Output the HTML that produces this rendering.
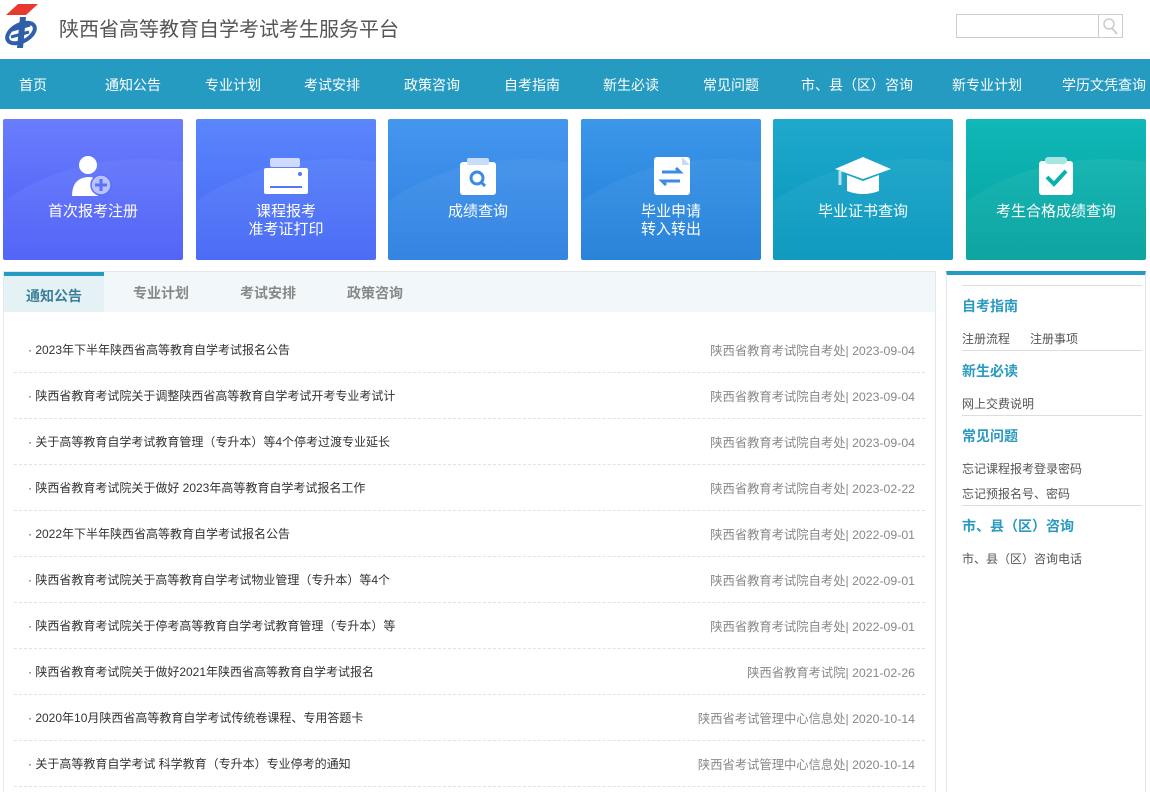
<!DOCTYPE html>
<html><head><meta charset="utf-8"><style>
*{margin:0;padding:0;box-sizing:border-box}
body{width:1150px;height:792px;overflow:hidden;background:#fff;font-family:"Liberation Sans","Noto Sans CJK SC",sans-serif;position:relative}
.abs{position:absolute}
.title{left:59px;top:13px;font-size:20px;color:#555;white-space:nowrap}
.search{left:956px;top:14px;width:167px;height:24px;border:1px solid #ccc}
.search .btn{position:absolute;right:0;top:0;width:24px;height:22px;border-left:1px solid #ccc}
.nav{left:0;top:59px;width:1150px;height:50px;background:#269bc1}
.nav span{position:absolute;top:16px;font-size:14px;color:#fff;white-space:nowrap}
.tile{top:119px;width:180px;height:141px;border-radius:2px;color:#fff;font-size:15px;text-align:center;overflow:hidden}
.tile .t{position:absolute;left:0;width:100%;line-height:18px}
.tile svg{position:absolute;left:50%;transform:translateX(-50%);top:36px}
.tile:before{content:"";position:absolute;left:-60px;top:40px;width:400px;height:300px;border-radius:50%;background:rgba(255,255,255,.05)}
.box{left:3px;top:271px;width:933px;height:521px;border:1px solid #e3e8ea;border-bottom:none}
.tabs{position:absolute;left:0;top:0;width:931px;height:40px;background:#f2f8fa}
.tabs span{position:absolute;top:11px;font-size:14px;color:#888;font-weight:bold}
.tabs .act{left:0;top:0;width:100px;height:40px;background:#e4f1f5;border-top:4px solid #269bc1;color:#3a7f99;padding:10px 0 0 22px}
.row{position:absolute;left:10px;width:911px;height:46px;border-bottom:1px dashed #e2e2e2;font-size:12px;color:#333}
.row .l{position:absolute;left:14px;top:14px;white-space:nowrap}
.row .r{position:absolute;right:10px;top:14px;color:#888;white-space:nowrap;font-size:12.3px}
.side{left:946px;top:271px;width:200px;height:521px;border:1px solid #e3e8ea;border-top:4px solid #269bc1;border-bottom:none}
.side .ln{position:absolute;left:15px;width:180px;border-top:1px solid #ddd}
.side .h{position:absolute;left:15px;font-size:14px;font-weight:bold;color:#2a9ac0;white-space:nowrap}
.side .i{position:absolute;left:15px;font-size:12px;color:#555;white-space:nowrap}
</style></head><body>
<svg class="abs" style="left:2px;top:3px" width="38" height="46" viewBox="0 0 38 46">
<path d="M16 1 L36 1 L24 12 L4 12 Z" fill="#e8392f"/>
<ellipse cx="19" cy="30" rx="15" ry="8.5" fill="none" stroke="#2f5fa8" stroke-width="4" transform="rotate(-28 19 30)"/>
<path d="M18 14 L24 14 L21 45 L15 45 Z" fill="#2f5fa8"/>
<path d="M10 27 L28 22 M9 34 L27 29" stroke="#2f5fa8" stroke-width="3"/>
</svg>
<div class="abs title">陕西省高等教育自学考试考生服务平台</div>
<div class="abs search"><div class="btn"><svg width="22" height="22" viewBox="0 0 22 22"><circle cx="10" cy="9" r="5" fill="none" stroke="#ccc" stroke-width="1.5"/><path d="M13 13 L18 19" stroke="#ccc" stroke-width="2"/></svg></div></div>
<div class="abs nav">
<span style="left:19px">首页</span><span style="left:105px">通知公告</span><span style="left:205px">专业计划</span><span style="left:304px">考试安排</span><span style="left:404px">政策咨询</span><span style="left:504px">自考指南</span><span style="left:603px">新生必读</span><span style="left:703px">常见问题</span><span style="left:801px">市、县（区）咨询</span><span style="left:952px">新专业计划</span><span style="left:1062px">学历文凭查询</span>
</div>

<div class="abs tile" style="left:3px;background:linear-gradient(#6a7dfc,#4a5df7)">
<svg width="50" height="44" viewBox="0 0 50 44"><circle cx="20" cy="10" r="9" fill="#fff"/><path d="M4 41 Q4 23 20 22 Q28 22 32 26 L30 41 Z" fill="#fff"/><circle cx="33" cy="30" r="10" fill="#b8c2fc" stroke="#5d70fa" stroke-width="1.5"/><path d="M33 24 V36 M27 30 H39" stroke="#5d70fa" stroke-width="3"/></svg>
<div class="t" style="top:84px">首次报考注册</div></div>
<div class="abs tile" style="left:196px;background:linear-gradient(#5b86fc,#4365f5)">
<svg width="46" height="44" viewBox="0 0 46 44"><rect x="7" y="3" width="30" height="9" rx="2" fill="#d0dafe"/><rect x="1" y="13" width="44" height="26" rx="2" fill="#fff"/><circle cx="37" cy="19" r="2" fill="#5577f8"/><rect x="7" y="31" width="32" height="2" fill="#5577f8"/></svg>
<div class="t" style="top:84px">课程报考<br>准考证打印</div></div>
<div class="abs tile" style="left:388px;background:linear-gradient(#4596ed,#2a7fe0)">
<svg width="46" height="44" viewBox="0 0 46 44"><rect x="5" y="7" width="36" height="33" rx="3" fill="#fff"/><rect x="12" y="3" width="22" height="7" rx="2" fill="#c9dcfa"/><circle cx="22" cy="23" r="6" fill="none" stroke="#3a8be6" stroke-width="3"/><path d="M26 27 L30 31" stroke="#3a8be6" stroke-width="3"/></svg>
<div class="t" style="top:84px">成绩查询</div></div>
<div class="abs tile" style="left:581px;background:linear-gradient(#3c97e9,#1f7dd8)">
<svg width="46" height="44" viewBox="0 0 46 44"><rect x="6" y="2" width="36" height="38" rx="3" fill="#fff"/><path d="M34 2 L42 10 L34 10 Z" fill="#c6dcf6"/><path d="M14 17 H32 L28 13 M32 26 H14 L18 30" fill="none" stroke="#3a8be6" stroke-width="3"/></svg>
<div class="t" style="top:84px">毕业申请<br>转入转出</div></div>
<div class="abs tile" style="left:773px;background:linear-gradient(#1fa9cc,#0395bc)">
<svg width="60" height="44" viewBox="0 0 60 44"><path d="M2 14 L30 2 L58 14 L30 24 Z" fill="#fff"/><path d="M14 20 V36 Q30 42 46 36 V20 L30 26 Z" fill="#fff"/><path d="M7 16 V30" stroke="#b5e2ee" stroke-width="3"/></svg>
<div class="t" style="top:84px">毕业证书查询</div></div>
<div class="abs tile" style="left:966px;background:linear-gradient(#10b8b8,#02a19c)">
<svg width="46" height="44" viewBox="0 0 46 44"><rect x="6" y="6" width="34" height="34" rx="3" fill="#fff"/><rect x="12" y="2" width="22" height="7" rx="3" fill="#a6e6e3"/><path d="M14 22 L21 29 L33 16" fill="none" stroke="#0ab0ae" stroke-width="4"/></svg>
<div class="t" style="top:84px">考生合格成绩查询</div></div>

<div class="abs box">
<div class="tabs"><span class="act">通知公告</span><span style="left:129px">专业计划</span><span style="left:236px">考试安排</span><span style="left:343px">政策咨询</span></div>
<div class="row" style="top:55px"><span class="l">· 2023年下半年陕西省高等教育自学考试报名公告</span><span class="r">陕西省教育考试院自考处| 2023-09-04</span></div>
<div class="row" style="top:101px"><span class="l">· 陕西省教育考试院关于调整陕西省高等教育自学考试开考专业考试计</span><span class="r">陕西省教育考试院自考处| 2023-09-04</span></div>
<div class="row" style="top:147px"><span class="l">· 关于高等教育自学考试教育管理（专升本）等4个停考过渡专业延长</span><span class="r">陕西省教育考试院自考处| 2023-09-04</span></div>
<div class="row" style="top:193px"><span class="l">· 陕西省教育考试院关于做好 2023年高等教育自学考试报名工作</span><span class="r">陕西省教育考试院自考处| 2023-02-22</span></div>
<div class="row" style="top:239px"><span class="l">· 2022年下半年陕西省高等教育自学考试报名公告</span><span class="r">陕西省教育考试院自考处| 2022-09-01</span></div>
<div class="row" style="top:285px"><span class="l">· 陕西省教育考试院关于高等教育自学考试物业管理（专升本）等4个</span><span class="r">陕西省教育考试院自考处| 2022-09-01</span></div>
<div class="row" style="top:331px"><span class="l">· 陕西省教育考试院关于停考高等教育自学考试教育管理（专升本）等</span><span class="r">陕西省教育考试院自考处| 2022-09-01</span></div>
<div class="row" style="top:377px"><span class="l">· 陕西省教育考试院关于做好2021年陕西省高等教育自学考试报名</span><span class="r">陕西省教育考试院| 2021-02-26</span></div>
<div class="row" style="top:423px"><span class="l">· 2020年10月陕西省高等教育自学考试传统卷课程、专用答题卡</span><span class="r">陕西省考试管理中心信息处| 2020-10-14</span></div>
<div class="row" style="top:469px"><span class="l">· 关于高等教育自学考试 科学教育（专升本）专业停考的通知</span><span class="r">陕西省考试管理中心信息处| 2020-10-14</span></div>
</div>

<div class="abs side">
<div class="ln" style="top:10px"></div>
<div class="h" style="top:21px">自考指南</div>
<div class="i" style="top:55px">注册流程&nbsp;&nbsp;&nbsp;&nbsp;&nbsp;&nbsp;注册事项</div>
<div class="ln" style="top:75px"></div>
<div class="h" style="top:86px">新生必读</div>
<div class="i" style="top:120px">网上交费说明</div>
<div class="ln" style="top:140px"></div>
<div class="h" style="top:151px">常见问题</div>
<div class="i" style="top:185px">忘记课程报考登录密码</div>
<div class="i" style="top:210px">忘记预报名号、密码</div>
<div class="ln" style="top:230px"></div>
<div class="h" style="top:241px">市、县（区）咨询</div>
<div class="i" style="top:275px">市、县（区）咨询电话</div>
</div>
</body></html>
